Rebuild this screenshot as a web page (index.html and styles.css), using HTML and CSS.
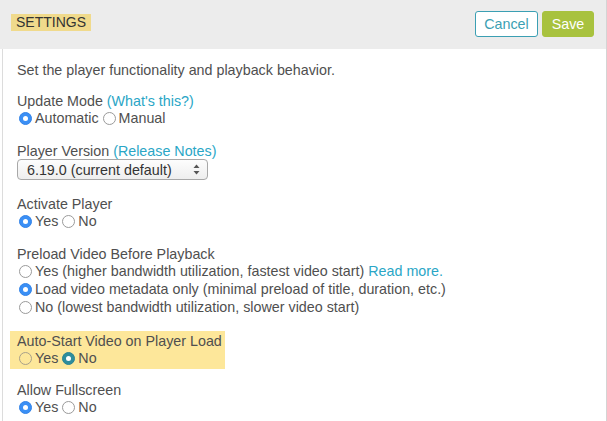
FILE: index.html
```html
<!DOCTYPE html>
<html>
<head>
<meta charset="utf-8">
<link rel="stylesheet" href="styles.css">
</head>
<body>
<div class="panel">
  <div class="header">
    <span class="title">SETTINGS</span>
    <div class="actions">
      <button class="btn btn-cancel">Cancel</button>
      <button class="btn btn-save">Save</button>
    </div>
  </div>
  <div class="content">
    <p class="intro">Set the player functionality and playback behavior.</p>

    <div class="group">
      <div class="label">Update Mode <a class="link">(What's this?)</a></div>
      <div class="row">
        <span class="opt"><span class="radio checked"></span>Automatic</span>
        <span class="opt"><span class="radio"></span>Manual</span>
      </div>
    </div>

    <div class="group">
      <div class="label">Player Version <a class="link">(Release Notes)</a></div>
      <div class="select">
        <span>6.19.0 (current default)</span>
        <svg class="arrows" width="7" height="11" viewBox="0 0 7 11"><path d="M3.5 0.5 L6.5 4 L0.5 4 Z" fill="#555"/><path d="M3.5 10.5 L6.5 7 L0.5 7 Z" fill="#555"/></svg>
      </div>
    </div>

    <div class="group">
      <div class="label">Activate Player</div>
      <div class="row">
        <span class="opt"><span class="radio checked"></span>Yes</span>
        <span class="opt"><span class="radio"></span>No</span>
      </div>
    </div>

    <div class="group">
      <div class="label">Preload Video Before Playback</div>
      <div class="row"><span class="opt"><span class="radio"></span>Yes (higher bandwidth utilization, fastest video start)&nbsp;<a class="link">Read more.</a></span></div>
      <div class="row"><span class="opt"><span class="radio checked"></span>Load video metadata only (minimal preload of title, duration, etc.)</span></div>
      <div class="row"><span class="opt"><span class="radio"></span>No (lowest bandwidth utilization, slower video start)</span></div>
    </div>

    <div class="group highlight">
      <div class="label">Auto-Start Video on Player Load</div>
      <div class="row">
        <span class="opt"><span class="radio"></span>Yes</span>
        <span class="opt"><span class="radio checked teal"></span>No</span>
      </div>
    </div>

    <div class="group">
      <div class="label">Allow Fullscreen</div>
      <div class="row">
        <span class="opt"><span class="radio checked"></span>Yes</span>
        <span class="opt"><span class="radio"></span>No</span>
      </div>
    </div>
  </div>
</div>
</body>
</html>
```

FILE: styles.css
```css
html, body {
  margin: 0;
  padding: 0;
  background: #ffffff;
}

body {
  font-family: "Liberation Sans", Arial, Helvetica, sans-serif;
  font-size: 14.3px;
  color: #4f4f4f;
}

.panel {
  width: 607px;
  height: 421px;
  box-sizing: border-box;
  border-right: 1px solid #d4d4d4;
  overflow: hidden;
}

.header {
  height: 49px;
  background: #ececec;
  display: flex;
  align-items: center;
  justify-content: space-between;
  padding: 0 12px 0 11px;
}

.title {
  align-self: flex-start;
  margin-top: 14px;
  background: #f0da8c;
  color: #333;
  font-size: 14px;
  line-height: 17px;
  padding: 0 5px;
}

.actions {
  display: flex;
  gap: 4px;
  margin-top: -1px;
}

.btn {
  font-family: "Liberation Sans", Arial, sans-serif;
  font-size: 14.3px;
  height: 26px;
  border-radius: 3px;
  padding: 0;
  cursor: pointer;
  text-align: center;
}

.btn-cancel {
  width: 63px;
  background: #ffffff;
  border: 1px solid #3b9fb3;
  color: #3b9fb3;
}

.btn-save {
  width: 52px;
  background: #a8c23e;
  border: 1px solid #a8c23e;
  color: #ffffff;
}

.content {
  margin-left: 2px;
  border-left: 1px solid #dcdcdc;
  padding: 13px 0 0 14px;
  height: 372px;
  box-sizing: border-box;
}

.intro {
  margin: 0 0 14px;
  line-height: 17px;
}

.group {
  margin-bottom: 16px;
}

.label {
  line-height: 16px;
}

.link {
  color: #2aa6c6;
  text-decoration: none;
}

.row {
  height: 18px;
  display: flex;
  align-items: center;
}

.opt {
  display: inline-flex;
  align-items: center;
  margin-right: 2px;
  white-space: nowrap;
}

.radio {
  width: 13px;
  height: 13px;
  box-sizing: border-box;
  border-radius: 50%;
  border: 1px solid #9a9a9a;
  background: #ffffff;
  margin: 0 3px 0 2px;
  position: relative;
  flex: none;
}

.radio.checked {
  background: #3a8ff5;
  border-color: #3484e8;
}

.radio.checked::after {
  content: "";
  position: absolute;
  width: 5px;
  height: 5px;
  border-radius: 50%;
  background: #ffffff;
  left: 3px;
  top: 3px;
}

.radio.checked.teal {
  background: #2e8d9c;
  border-color: #2a8392;
}

.highlight {
  display: inline-block;
  background: #fde79a;
  margin: -1px 0 13px -7px;
  padding: 2px 3px 2px 7px;
}

.highlight .radio:not(.checked) {
  background: transparent;
  border-color: #a8a08a;
}

.select {
  width: 191px;
  height: 21px;
  box-sizing: border-box;
  border: 1px solid #a8a8a8;
  border-radius: 4px;
  background: linear-gradient(#fdfdfd, #eeeeee);
  display: flex;
  align-items: center;
  justify-content: space-between;
  padding: 0 7px 0 9px;
  color: #333;
}

.arrows {
  display: block;
}
```
